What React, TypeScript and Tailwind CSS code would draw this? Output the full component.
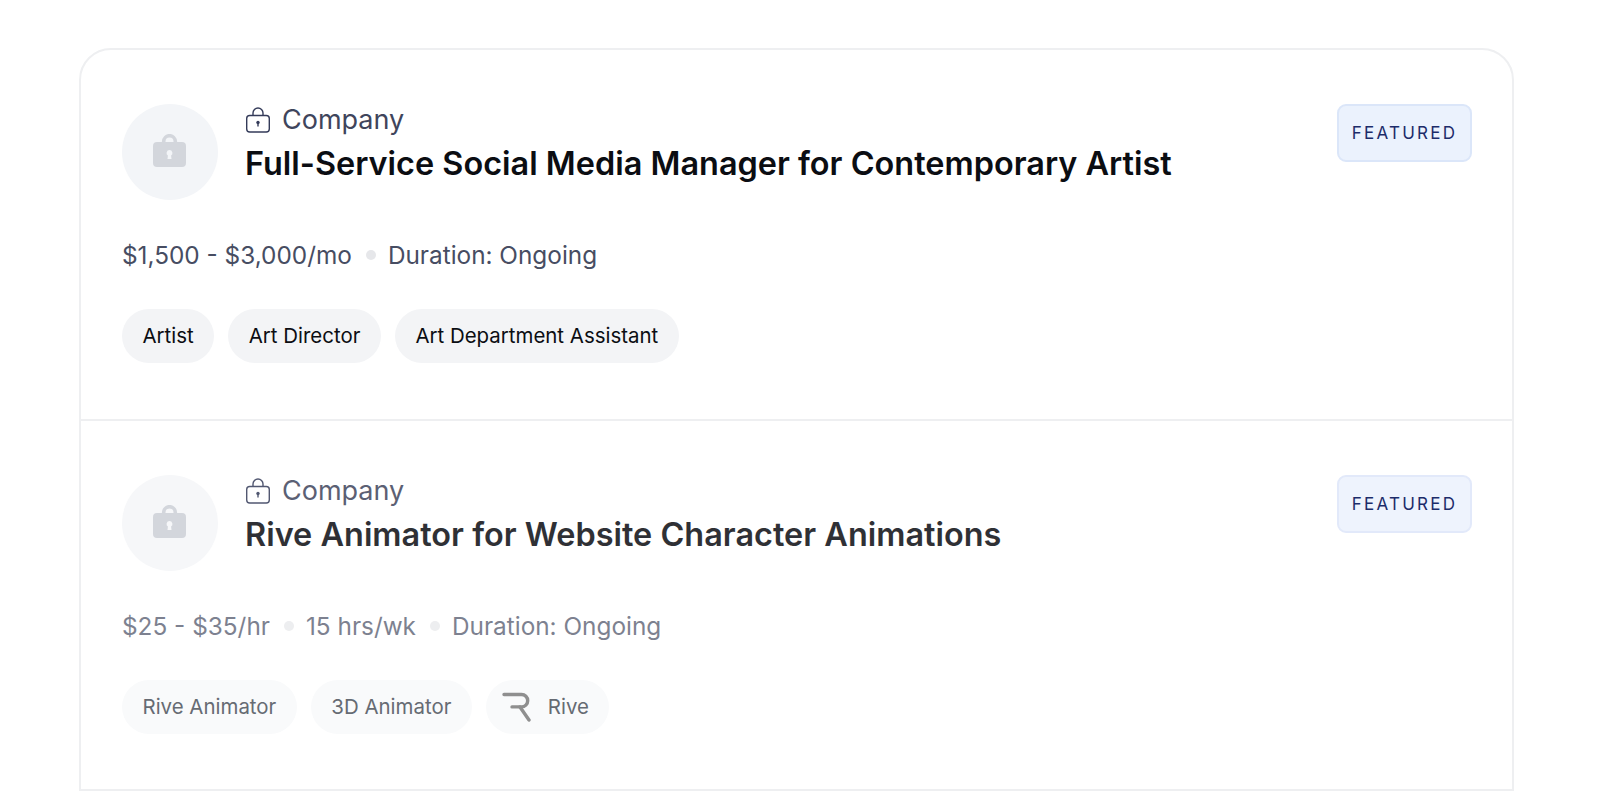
const LockGlyph = () => (
  <svg className="w-[33px] h-[33px] mr-[2px] mb-[3px]" viewBox="0 0 33 33" fill="none">
    <path d="M10.7 10V7.5a5.8 5.8 0 0 1 11.6 0V10" stroke="#d3d6dc" strokeWidth="3.6" />
    <path
      fillRule="evenodd"
      d="M0 12a4 4 0 0 1 4-4h25a4 4 0 0 1 4 4v17a4 4 0 0 1-4 4H4a4 4 0 0 1-4-4V12zM16.5 16a3 3 0 0 0-1.6 5.5l-.4 3.5h4l-.4-3.5a3 3 0 0 0-1.6-5.5z"
      fill="#d3d6dc"
    />
  </svg>
)

const LockOutline = () => (
  <svg className="w-[27px] h-[26px]" viewBox="0 0 27 26" fill="none" stroke="#343b59" strokeWidth="1.4">
    <rect x="1.7" y="8.5" width="22.6" height="16.5" rx="3" />
    <path d="M8 8.5V6a5 5 0 0 1 10 0v2.5" />
    <circle cx="13" cy="15.5" r="1.7" fill="#343b59" stroke="none" />
    <path d="M13 15.5v4" />
  </svg>
)

const RiveLogo = () => (
  <svg className="w-[30px] h-[30px]" viewBox="0 0 30 30" fill="none" stroke="#8f8f8f" strokeWidth="3.4" strokeLinecap="round">
    <path d="M2 2.5h17.5a6.2 6.2 0 0 1 0 12.4H10" />
    <path d="M18 15l9 13" />
  </svg>
)

function Tag({ label, logo, dim }: { label: string; logo?: boolean; dim?: boolean }) {
  return (
    <span
      className={`flex items-center h-[54px] rounded-full text-[20.45px] ${dim ? 'bg-[#f9fafb] text-[#666b73]' : 'bg-[#f3f4f6] text-[#0b0d12]'} ${logo ? 'pl-[16px] pr-[20px] gap-[16px]' : 'px-[20.5px]'}`}
    >
      {logo && <RiveLogo />}
      {label}
    </span>
  )
}

function Dot() {
  return <span className="w-[10px] h-[10px] rounded-full bg-[#e6e7ea]" />
}

interface JobProps {
  title: string
  meta: string[]
  tags: { label: string; logo?: boolean }[]
  dim?: boolean
}

function Job({ title, meta, tags, dim }: JobProps) {
  return (
    <div className={`pt-[54px] pl-[41px] pr-[40px] ${dim ? 'h-[368px]' : 'h-[371px]'}`}>
      <div className="flex items-start justify-between">
        <div className="flex items-start gap-[27px]">
          <div className={`w-[96px] h-[96px] rounded-full flex items-center justify-center ${dim ? 'bg-[#f6f7f9]' : 'bg-[#f3f5f8]'}`}>
            <LockGlyph />
          </div>
          <div className={`flex flex-col pt-[1px] ${dim ? 'opacity-85' : ''}`}>
            <div className="flex items-center gap-[10px] text-[27px] leading-[30px] text-[#3f455c]">
              <LockOutline />
              Company
            </div>
            <div className="mt-[9px] text-[32.45px] leading-[40px] font-semibold text-[#0b0d12]">{title}</div>
          </div>
        </div>
        <span className={`flex items-center justify-center w-[135px] h-[58px] pt-[2px] rounded-[9px] border-2 text-[17px] tracking-[0.13em] text-[#1c2c6a] ${dim ? 'border-[#e2e9fa] bg-[#eef3fd]' : 'border-[#dbe6f9] bg-[#ebf2fd]'}`}>
          FEATURED
        </span>
      </div>
      <div className={`mt-[38px] flex items-center gap-[14px] text-[24.35px] leading-[34px] text-[#474d62] ${dim ? 'opacity-70' : ''}`}>
        {meta.map((m, i) => (
          <div key={m} className="flex items-center gap-[12px]">
            {i > 0 && <Dot />}
            <span>{m}</span>
          </div>
        ))}
      </div>
      <div className="mt-[37px] flex gap-[14px]">
        {tags.map((t) => (
          <Tag key={t.label} label={t.label} logo={t.logo} dim={dim} />
        ))}
      </div>
    </div>
  )
}

export default function App() {
  return (
    <div className="h-[791px] overflow-hidden bg-white pt-[48px] pl-[79px] font-['Inter',sans-serif]">
      <div className="w-[1435px] rounded-t-[32px] border-2 border-[#eeeff1] divide-y-2 divide-[#eeeff1]">
        <Job
          title="Full-Service Social Media Manager for Contemporary Artist"
          meta={['$1,500 - $3,000/mo', 'Duration: Ongoing']}
          tags={[{ label: 'Artist' }, { label: 'Art Director' }, { label: 'Art Department Assistant' }]}
        />
        <Job
          dim
          title="Rive Animator for Website Character Animations"
          meta={['$25 - $35/hr', '15 hrs/wk', 'Duration: Ongoing']}
          tags={[{ label: 'Rive Animator' }, { label: '3D Animator' }, { label: 'Rive', logo: true }]}
        />
      </div>
    </div>
  )
}
